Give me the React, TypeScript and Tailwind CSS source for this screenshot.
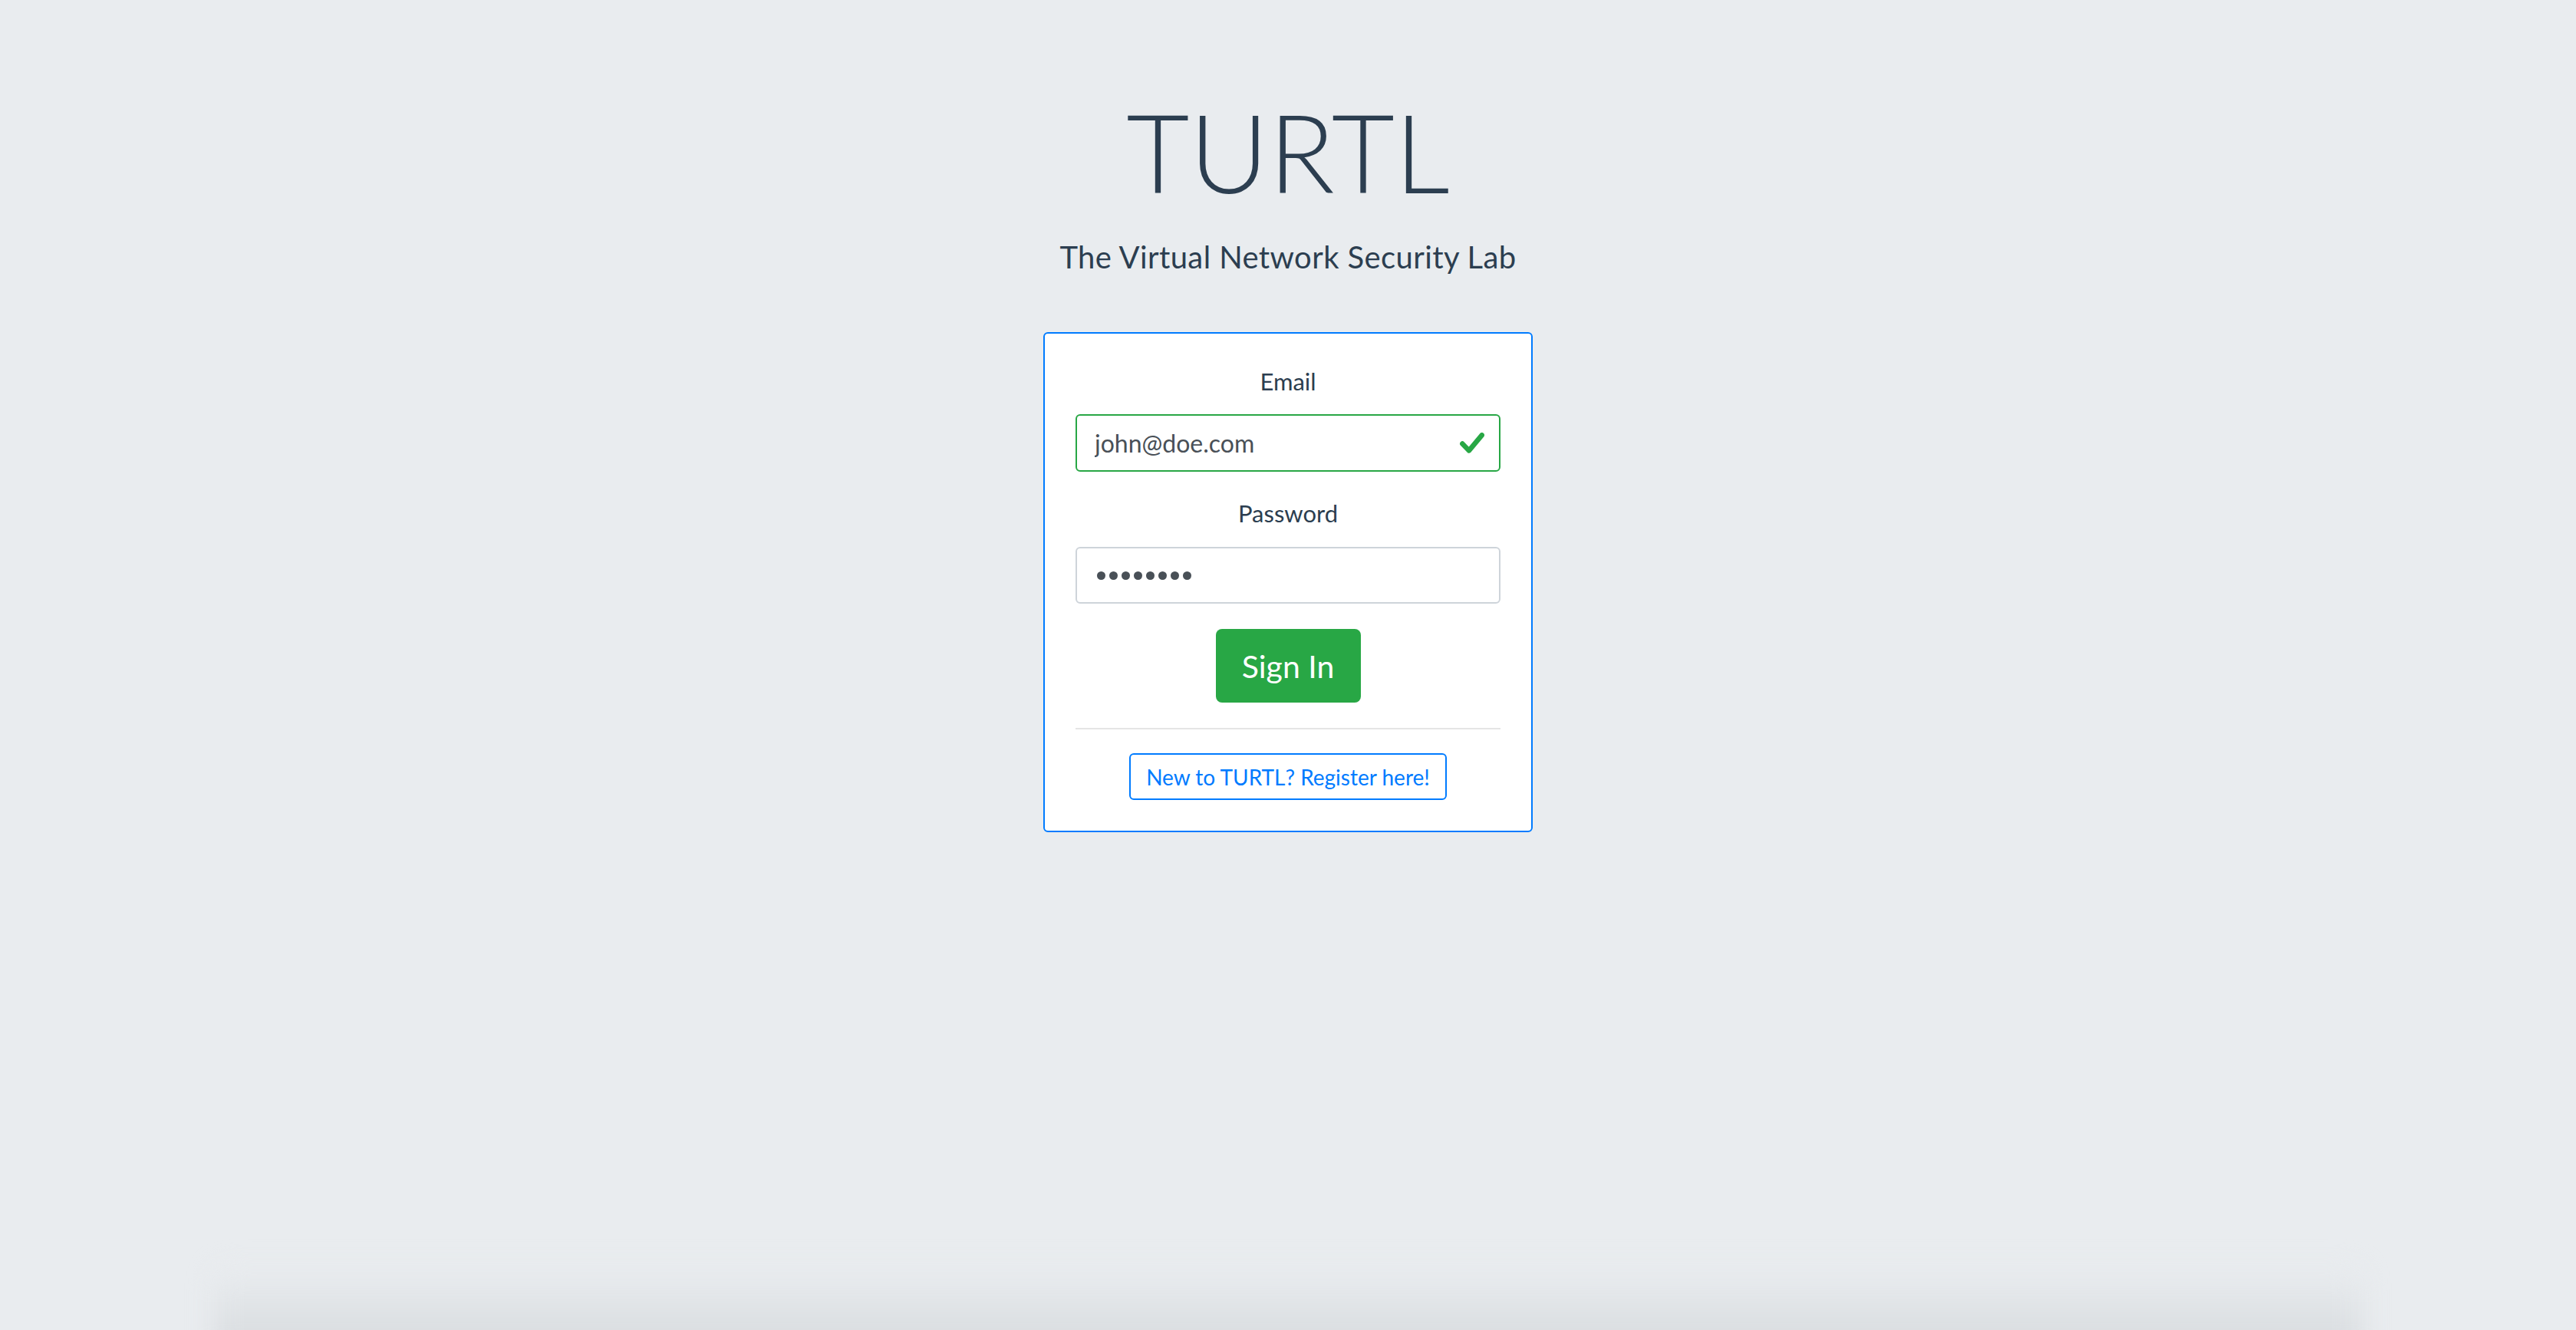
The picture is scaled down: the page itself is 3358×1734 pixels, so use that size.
import React from 'react';

const font = { fontFamily: 'Lato, "Noto Sans", sans-serif' };

const CheckIcon: React.FC = () => (
  <svg width="32" height="27" viewBox="0 0 32 27" className="shrink-0">
    <polyline
      points="3.3,14.5 12,23.4 28.7,3.3"
      fill="none"
      stroke="#28a745"
      strokeWidth="6.5"
      strokeLinecap="round"
      strokeLinejoin="round"
    />
  </svg>
);

const App: React.FC = () => {
  return (
    <div
      className="h-[1734px] overflow-hidden bg-[#e9ecef] flex flex-col items-center text-[#2c3e50]"
      style={font}
    >
      <h1 className="mt-[126px] text-[142px] leading-none font-light">TURTL</h1>
      <p className="mt-[47px] text-[40px] leading-none tracking-[0.4px]">The Virtual Network Security Lab</p>

      <form className="mt-[78px] w-[638px] bg-white border-2 border-[#007bff] rounded-[6px] px-[40px] pt-[47px] pb-[40px] flex flex-col items-center">
        <label className="text-[31px] leading-none">Email</label>
        <div className="mt-[27px] w-full h-[75px] border-2 border-[#28a745] rounded-[6px] flex items-center pl-[23px] pr-[19px]">
          <input
            readOnly
            value="john@doe.com"
            className="flex-1 min-w-0 bg-transparent outline-none text-[32px] text-[#495057]"
            style={font}
          />
          <CheckIcon />
        </div>

        <label className="mt-[39px] text-[31px] leading-none">Password</label>
        <div className="mt-[28px] w-full h-[74px] border-2 border-[#ced4da] rounded-[6px] flex items-center pl-[26px] gap-[5px]">
          {Array.from({ length: 8 }).map((_, i) => (
            <span key={i} className="w-[11px] h-[11px] rounded-full bg-[#495057]" />
          ))}
        </div>

        <button
          type="button"
          className="mt-[33px] w-[189px] h-[96px] bg-[#28a745] text-white text-[41px] leading-none rounded-[8px]"
        >
          Sign In
        </button>

        <hr className="mt-[33px] w-full border-0 h-[2px] bg-[#e5e5e5]" />

        <button
          type="button"
          className="mt-[31px] w-[414px] h-[61px] border-2 border-[#007bff] rounded-[6px] text-[#007bff] text-[28px] leading-none whitespace-nowrap"
        >
          New to TURTL? Register here!
        </button>
      </form>

      <div className="mt-auto mb-[-30px] w-[2800px] h-[110px] rounded-t-[20px] bg-gradient-to-b from-[#e9ecef] to-[#d6dadd] blur-lg" />
    </div>
  );
};

export default App;
